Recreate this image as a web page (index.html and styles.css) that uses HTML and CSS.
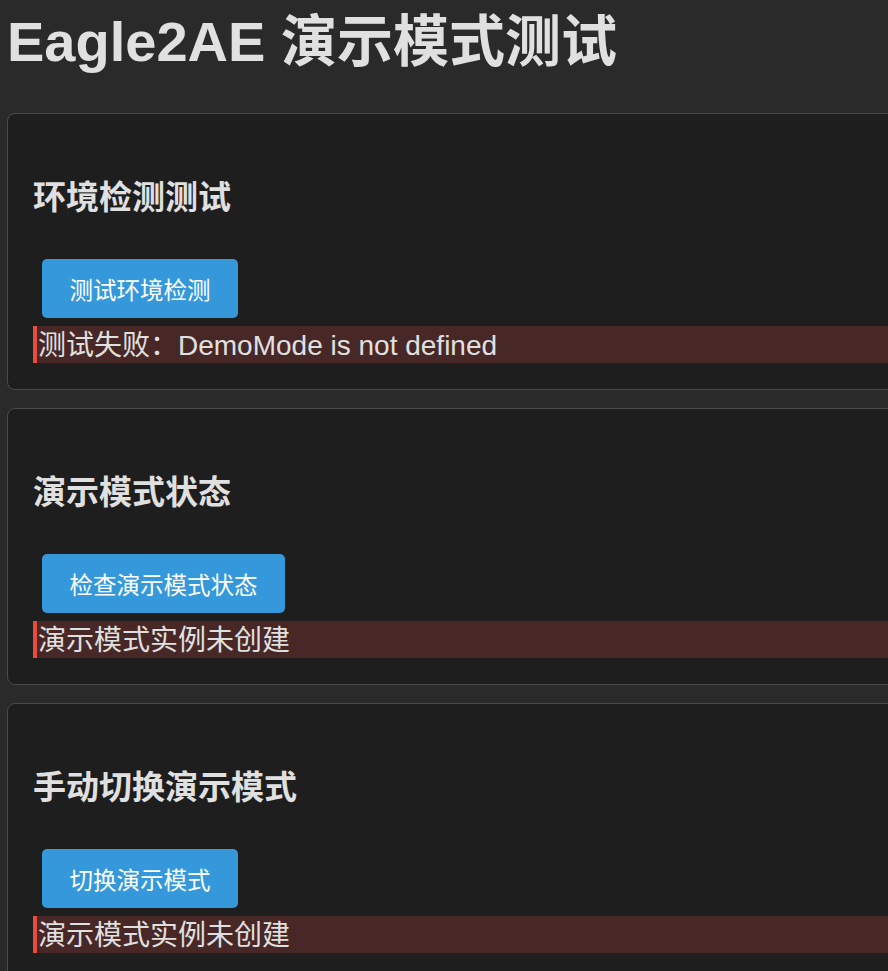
FILE: index.html
```html
<!DOCTYPE html>
<html lang="zh-CN">
<head>
<meta charset="utf-8">
<title>Eagle2AE 演示模式测试</title>
<link rel="stylesheet" href="styles.css">
</head>
<body>
<div class="page">
  <h1 class="title">Eagle2AE 演示模式测试</h1>

  <section class="card">
    <h2 class="card-title">环境检测测试</h2>
    <div class="actions"><button class="btn">测试环境检测</button></div>
    <div class="result error">测试失败：DemoMode is not defined</div>
  </section>

  <section class="card">
    <h2 class="card-title">演示模式状态</h2>
    <div class="actions"><button class="btn">检查演示模式状态</button></div>
    <div class="result error">演示模式实例未创建</div>
  </section>

  <section class="card">
    <h2 class="card-title">手动切换演示模式</h2>
    <div class="actions"><button class="btn">切换演示模式</button></div>
    <div class="result error">演示模式实例未创建</div>
  </section>
</div>
</body>
</html>
```

FILE: styles.css
```css
html {
  overflow: hidden;
}
body {
  margin: 0;
  background: #2a2a2a;
  color: #e0e0e0;
  font-family: "Liberation Sans", "Noto Sans CJK SC", sans-serif;
}
.page {
  width: 1100px;
  padding: 0 7px;
}
.title {
  margin: 10px 0 39px 0;
  font-size: 56px;
  line-height: 64px;
  font-weight: bold;
  color: #e0e0e0;
}
.card {
  background: #1e1e1e;
  border: 1px solid #4a4a4a;
  border-radius: 8px;
  padding: 0 25px 26px 25px;
  margin-bottom: 18px;
}
.card-title {
  margin: 0;
  padding-top: 64px;
  padding-bottom: 41px;
  font-size: 33px;
  line-height: 40px;
  font-weight: bold;
  color: #e0e0e0;
}
.actions {
  padding-left: 9px;
  margin-bottom: 8px;
}
.btn {
  display: inline-block;
  height: 59px;
  padding: 0 27.5px;
  border: none;
  border-radius: 5px;
  background: #3498db;
  color: #ffffff;
  font-family: "Liberation Sans", "Noto Sans CJK SC", sans-serif;
  font-size: 23.5px;
  cursor: pointer;
}
.result {
  height: 35px;
  padding-top: 2px;
  line-height: 35px;
  font-size: 28px;
  color: #e0e0e0;
  white-space: nowrap;
}
.result.error {
  background: #472826;
  border-left: 4px solid #e74c3c;
  padding-left: 1px;
}
```
